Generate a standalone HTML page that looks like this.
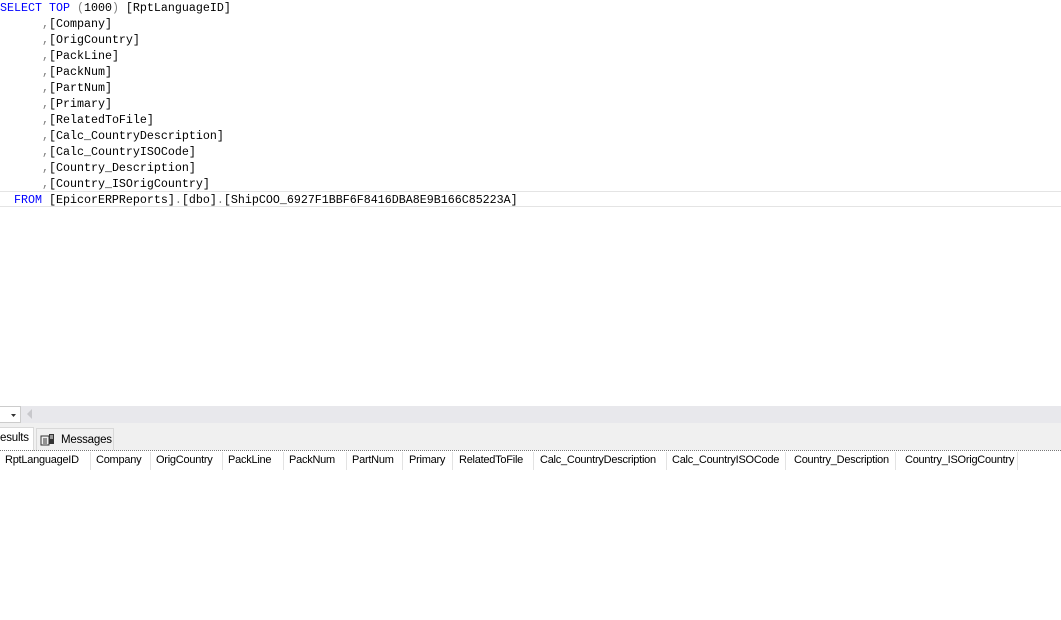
<!DOCTYPE html>
<html><head><meta charset="utf-8"><style>
body{margin:0;width:1061px;height:620px;background:#fff;position:relative;overflow:hidden;font-family:"Liberation Sans",sans-serif}
.code{position:absolute;left:0;top:0;font-family:"Liberation Mono",monospace;font-size:11.67px;line-height:16px;white-space:pre;color:#000}
.k{color:#0000ff}.g{color:#808080}
.cur{position:absolute;left:0;top:191px;width:1061px;height:14px;border-top:1px solid #e4e4e4;border-bottom:1px solid #e4e4e4}
.tb{position:absolute;left:0;top:406px;width:1061px;height:17px;background:#e8e8ec}
.dd{position:absolute;left:0;top:406px;width:20px;height:15px;background:#fff;border:1px solid #ccc;border-left:none}
.tabs{position:absolute;left:0;top:423px;width:1061px;height:27px;background:#f0f0f0}
.tab{position:absolute;top:5px;height:21px;font-size:11.5px;line-height:20px;letter-spacing:-0.2px;border:1px solid #d9d9d9;border-bottom:none}
.dots{position:absolute;left:0;top:450px;width:1061px;border-top:1px dotted #777}
.hdr{position:absolute;top:452px;height:18px;font-size:11px;line-height:17px;letter-spacing:-0.25px;color:#000}
.sep{position:absolute;top:452px;width:1px;height:18px;background:#e3e3e3}
</style></head><body>
<div class="cur"></div>
<div class="code"><span class="k">SELECT TOP</span> <span class="g">(</span>1000<span class="g">)</span> [RptLanguageID]
      <span class="g">,</span>[Company]
      <span class="g">,</span>[OrigCountry]
      <span class="g">,</span>[PackLine]
      <span class="g">,</span>[PackNum]
      <span class="g">,</span>[PartNum]
      <span class="g">,</span>[Primary]
      <span class="g">,</span>[RelatedToFile]
      <span class="g">,</span>[Calc_CountryDescription]
      <span class="g">,</span>[Calc_CountryISOCode]
      <span class="g">,</span>[Country_Description]
      <span class="g">,</span>[Country_ISOrigCountry]
  <span class="k">FROM</span> [EpicorERPReports]<span class="g">.</span>[dbo]<span class="g">.</span>[ShipCOO_6927F1BBF6F8416DBA8E9B166C85223A]</div>
<div class="tb"></div>
<div class="dd"><svg width="20" height="15" style="position:absolute;left:0;top:0"><path d="M11 7h5l-2.5 3z" fill="#333"/></svg></div>
<svg width="8" height="12" style="position:absolute;left:26px;top:408px"><path d="M6 1v10L1 6z" fill="#c8c8cc"/></svg>
<div class="tabs">
<div class="tab" style="left:-1px;width:33px;background:#fff;top:4px;height:23px">esults</div>
<div class="tab" style="left:36px;width:76px;background:#f0f0f0;">
<svg width="16" height="14" style="position:absolute;left:3px;top:4px"><rect x="1" y="3" width="8" height="9" fill="none" stroke="#333"/><path d="M3 6h4M3 8h4M3 10h4" stroke="#333"/><rect x="9" y="1" width="5" height="10" fill="#333"/><path d="M10 3h3M10 5h3" stroke="#fff"/></svg>
<span style="position:absolute;left:24px;top:1px">Messages</span></div>
</div>
<div class="dots"></div>
<div class="hdr" style="left:5px">RptLanguageID</div><div class="sep" style="left:90px"></div>
<div class="hdr" style="left:96px">Company</div><div class="sep" style="left:150px"></div>
<div class="hdr" style="left:156px">OrigCountry</div><div class="sep" style="left:222px"></div>
<div class="hdr" style="left:228px">PackLine</div><div class="sep" style="left:283px"></div>
<div class="hdr" style="left:289px">PackNum</div><div class="sep" style="left:346px"></div>
<div class="hdr" style="left:352px">PartNum</div><div class="sep" style="left:402px"></div>
<div class="hdr" style="left:409px">Primary</div><div class="sep" style="left:452px"></div>
<div class="hdr" style="left:459px">RelatedToFile</div><div class="sep" style="left:533px"></div>
<div class="hdr" style="left:540px">Calc_CountryDescription</div><div class="sep" style="left:666px"></div>
<div class="hdr" style="left:672px">Calc_CountryISOCode</div><div class="sep" style="left:785px"></div>
<div class="hdr" style="left:794px">Country_Description</div><div class="sep" style="left:895px"></div>
<div class="hdr" style="left:905px">Country_ISOrigCountry</div><div class="sep" style="left:1017px"></div>
</body></html>
